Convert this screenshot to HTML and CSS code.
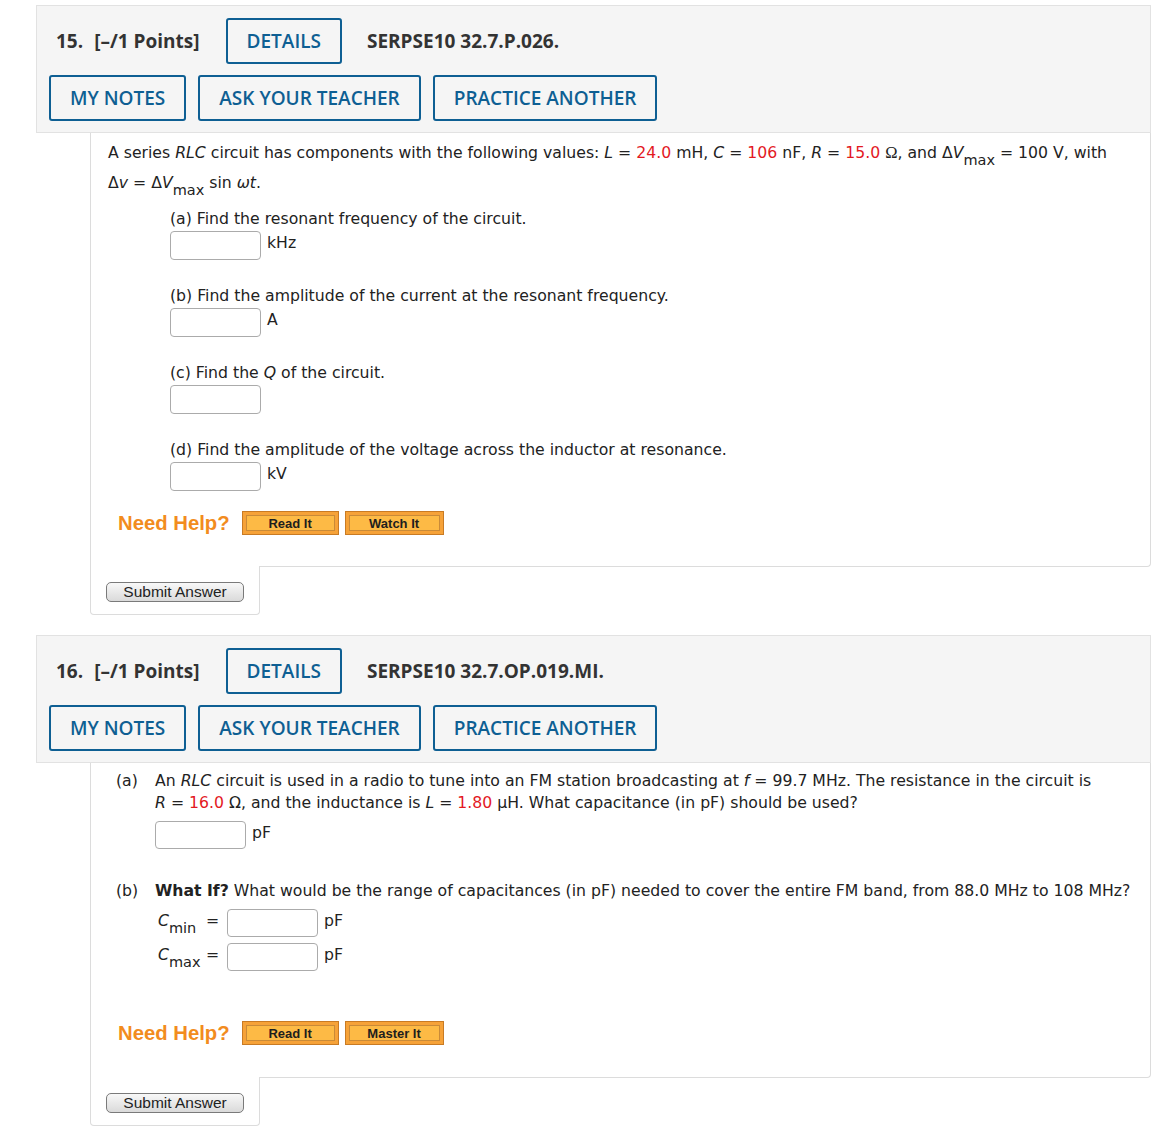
FILE: index.html
```html
<!DOCTYPE html>
<html lang="en">
<head>
<meta charset="utf-8">
<title>Questions</title>
<link rel="stylesheet" href="styles.css">
</head>
<body>

<div class="question">
  <div class="q-header">
    <div class="title-row">
      <span class="q-num">15.</span>
      <span class="q-points">[&ndash;/1 Points]</span>
      <span class="hbtn">DETAILS</span>
      <span class="q-code">SERPSE10 32.7.P.026.</span>
    </div>
    <div class="btn-row">
      <span class="hbtn">MY NOTES</span>
      <span class="hbtn">ASK YOUR TEACHER</span>
      <span class="hbtn">PRACTICE ANOTHER</span>
    </div>
  </div>
  <div class="q-body q15">
    <p class="stem">A series <i>RLC</i> circuit has components with the following values: <i>L</i> = <span class="red">24.0</span> mH, <i>C</i> = <span class="red">106</span> nF, <i>R</i> = <span class="red">15.0</span> <span class="serif">&Omega;</span>, and &Delta;<i>V</i><span class="sub">max</span> = 100&nbsp;V, with <span class="nw">&Delta;<i>v</i> = &Delta;<i>V</i><span class="sub">max</span> sin <i>&omega;t</i>.</span></p>

    <div class="part">
      <div class="part-text">(a) Find the resonant frequency of the circuit.</div>
      <div class="answer"><span class="input"></span><span class="unit">kHz</span></div>
    </div>
    <div class="part">
      <div class="part-text">(b) Find the amplitude of the current at the resonant frequency.</div>
      <div class="answer"><span class="input"></span><span class="unit">A</span></div>
    </div>
    <div class="part">
      <div class="part-text">(c) Find the <i>Q</i> of the circuit.</div>
      <div class="answer"><span class="input"></span></div>
    </div>
    <div class="part last">
      <div class="part-text">(d) Find the amplitude of the voltage across the inductor at resonance.</div>
      <div class="answer"><span class="input"></span><span class="unit">kV</span></div>
    </div>

    <div class="need-help">
      <span class="nh-label">Need Help?</span>
      <span class="help-btn">Read It</span>
      <span class="help-btn">Watch It</span>
    </div>
  </div>
  <div class="submit-box"><span class="submit">Submit Answer</span></div>
</div>

<div class="question">
  <div class="q-header">
    <div class="title-row">
      <span class="q-num">16.</span>
      <span class="q-points">[&ndash;/1 Points]</span>
      <span class="hbtn">DETAILS</span>
      <span class="q-code">SERPSE10 32.7.OP.019.MI.</span>
    </div>
    <div class="btn-row">
      <span class="hbtn">MY NOTES</span>
      <span class="hbtn">ASK YOUR TEACHER</span>
      <span class="hbtn">PRACTICE ANOTHER</span>
    </div>
  </div>
  <div class="q-body q16">
    <div class="lpart">
      <div class="plabel">(a)</div>
      <div class="pcontent">
        <div class="ptext">An <i>RLC</i> circuit is used in a radio to tune into an FM station broadcasting at <i>f</i> = 99.7 MHz. The resistance in the circuit is <span class="nw"><i>R</i> = <span class="red">16.0</span> &Omega;,</span> and the inductance is <i>L</i> = <span class="red">1.80</span> &micro;H. What capacitance (in pF) should be used?</div>
        <div class="answer a16"><span class="input i16"></span><span class="unit">pF</span></div>
      </div>
    </div>
    <div class="lpart b">
      <div class="plabel">(b)</div>
      <div class="pcontent">
        <div class="ptext"><b>What If?</b> What would be the range of capacitances (in pF) needed to cover the entire FM band, from 88.0 MHz to 108 MHz?</div>
        <div class="crow first">
          <span class="clabel"><i>C</i><span class="sub">min</span></span>
          <span class="eq">=</span>
          <span class="input i16"></span><span class="unit">pF</span>
        </div>
        <div class="crow">
          <span class="clabel"><i>C</i><span class="sub">max</span></span>
          <span class="eq">=</span>
          <span class="input i16"></span><span class="unit">pF</span>
        </div>
      </div>
    </div>

    <div class="need-help">
      <span class="nh-label">Need Help?</span>
      <span class="help-btn">Read It</span>
      <span class="help-btn">Master It</span>
    </div>
  </div>
  <div class="submit-box"><span class="submit">Submit Answer</span></div>
</div>

</body>
</html>
```

FILE: styles.css
```css
html, body {
  margin: 0;
  padding: 0;
  background: #ffffff;
}

body {
  padding-top: 5px;
  font-family: "DejaVu Sans", Verdana, sans-serif;
  font-size: 15.7px;
  color: #222222;
}

.question {
  margin-left: 36px;
  width: 1115px;
  margin-bottom: 20px;
}

/* ---------- header ---------- */
.q-header {
  background: #f5f5f5;
  border: 1px solid #e2e2e2;
  padding: 12px 12px 11px 12px;
  font-family: "Open Sans", "Liberation Sans", sans-serif;
}

.title-row {
  display: flex;
  align-items: center;
  padding-left: 7px;
  height: 46px;
}

.q-num,
.q-points,
.q-code {
  font-weight: 700;
  font-size: 19px;
  color: #333333;
}

.q-num {
  margin-right: 11px;
}

.q-points {
  margin-right: 26px;
}

.q-code {
  margin-left: 25px;
}

.btn-row {
  display: flex;
  gap: 12px;
  margin-top: 11px;
}

.hbtn {
  box-sizing: border-box;
  display: inline-flex;
  align-items: center;
  height: 46px;
  padding: 0 19px;
  border: 2px solid #0e5f93;
  border-radius: 3px;
  color: #0e5f93;
  font-size: 19px;
  font-weight: 600;
  background: transparent;
}

/* ---------- body ---------- */
.q-body {
  margin-left: 54px;
  border: 1px solid #dcdcdc;
  border-top: none;
  border-radius: 0 0 4px 0;
  background: #ffffff;
}

.q15 {
  padding: 5px 12px 31px 17px;
}

.q16 {
  padding: 7px 8px 32px 25px;
}

.red {
  color: #e3191f;
}

.serif {
  font-family: "Liberation Serif", "DejaVu Serif", serif;
  font-size: 16.5px;
}

.nw {
  white-space: nowrap;
}

.sub {
  font-size: 14.5px;
  position: relative;
  top: 7px;
}

.stem {
  margin: 0 0 10px 0;
  line-height: 30px;
}

.part {
  margin-left: 62px;
  margin-bottom: 25px;
  line-height: 22px;
}

.part.last {
  margin-bottom: 0;
}

.answer {
  display: flex;
  align-items: flex-start;
  margin-top: 1px;
}

.input {
  box-sizing: border-box;
  display: block;
  width: 91px;
  height: 29px;
  border: 1px solid #ababab;
  border-radius: 4px;
  background: #ffffff;
}

.unit {
  margin-left: 6px;
  margin-top: 1px;
  line-height: 22px;
}

/* ---------- question 16 parts ---------- */
.lpart {
  display: flex;
  line-height: 22px;
}

.lpart.b {
  margin-top: 31px;
}

.plabel {
  width: 39px;
  flex: none;
}

.pcontent {
  flex: 1;
}

.a16 {
  margin-top: 7px;
}

.i16 {
  width: 91px;
  height: 28px;
}

.crow {
  display: flex;
  align-items: flex-start;
  margin-top: 6px;
}

.crow.first {
  margin-top: 7px;
}

.clabel {
  width: 51px;
  padding-left: 3px;
  box-sizing: border-box;
  line-height: 22px;
  margin-top: 1px;
}

.eq {
  width: 21px;
  line-height: 22px;
  margin-top: 1px;
}

/* ---------- need help ---------- */
.need-help {
  display: flex;
  align-items: center;
  margin-top: 20px;
  margin-left: 10px;
  height: 24px;
}

.q16 .need-help {
  margin-top: 50px;
  margin-left: 2px;
}

.nh-label {
  font-family: "Liberation Sans", Arial, sans-serif;
  font-weight: bold;
  font-size: 20.3px;
  color: #f28c1e;
  margin-right: 12px;
}

.help-btn {
  box-sizing: border-box;
  display: inline-flex;
  align-items: center;
  justify-content: center;
  height: 24px;
  width: 97px;
  margin-right: 6px;
  border: 1px solid #c97b24;
  background: #fdba45;
  box-shadow: inset 0 0 0 3px #f6a238, inset 0 0 0 4px #c98a38;
  font-family: "Liberation Sans", Arial, sans-serif;
  font-weight: bold;
  font-size: 13px;
  color: #1e1e1e;
}

.help-btn + .help-btn {
  width: 99px;
}

/* ---------- submit ---------- */
.submit-box {
  position: relative;
  margin-left: 54px;
  margin-top: -1px;
  width: 170px;
  box-sizing: border-box;
  height: 49px;
  border: 1px solid #dcdcdc;
  border-top: none;
  border-radius: 0 0 4px 4px;
  background: #ffffff;
  padding: 16px 0 0 15px;
}

.submit {
  box-sizing: border-box;
  display: inline-flex;
  align-items: center;
  justify-content: center;
  width: 138px;
  height: 20px;
  border: 1px solid #7a7a7a;
  border-radius: 5px;
  background: linear-gradient(#f8f8f8, #dadada);
  font-family: "Liberation Sans", Arial, sans-serif;
  font-size: 15.5px;
  color: #222222;
}
```
